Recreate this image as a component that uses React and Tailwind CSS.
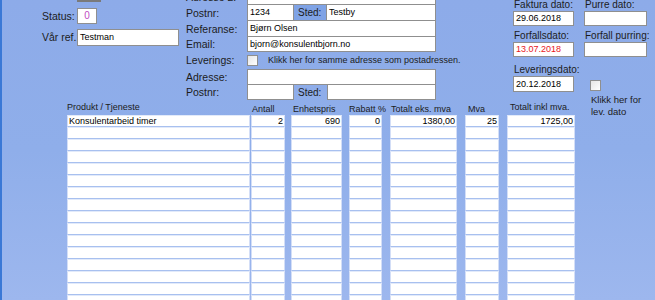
import React from 'react';

const label = "text-[10.5px] leading-none text-[#1c1c1c] whitespace-nowrap";
const frame = "bg-white border border-[#8f8f8f] leading-none flex items-center whitespace-nowrap";
const box = `${frame} text-[9px] text-black pl-[2px]`;

const columns = [
    { key: 'prod', head: 'Produkt / Tjeneste', w: 'w-[183px]', gap: 'mr-[1px]', headPad: 'pl-0 pb-[4px]', align: 'justify-start pl-[1px]', value: 'Konsulentarbeid timer' },
    { key: 'ant', head: 'Antall', w: 'w-[34px]', gap: 'mr-[6px]', headPad: 'pl-[1px]', align: 'justify-end pr-[1px]', value: '2' },
    { key: 'enh', head: 'Enhetspris', w: 'w-[51px]', gap: 'mr-[7px]', headPad: 'pl-[2px]', align: 'justify-end pr-[1px]', value: '690' },
    { key: 'rab', head: 'Rabatt %', w: 'w-[33px]', gap: 'mr-[8px]', headPad: 'pl-0', align: 'justify-end pr-[1px]', value: '0' },
    { key: 'eks', head: 'Totalt eks. mva', w: 'w-[67px]', gap: 'mr-[8px]', headPad: 'pl-[1px]', align: 'justify-end pr-[1px]', value: '1380,00' },
    { key: 'mva', head: 'Mva', w: 'w-[34px]', gap: 'mr-[8px]', headPad: 'pl-[3px]', align: 'justify-end pr-[1px]', value: '25' },
    { key: 'inkl', head: 'Totalt inkl mva.', w: 'w-[68px]', gap: '', headPad: 'pl-[3px] pb-[4px]', align: 'justify-end pr-[1px]', value: '1725,00' },
];

const ROWS = 16;

const Checkbox = ({ className = '' }) => (
    <div className={`w-[11px] h-[11px] shrink-0 border border-[#8f8f8f] bg-gradient-to-br from-[#e6e6e6] to-white ${className}`} />
);

const DateField = ({ title, value, red, w }) => (
    <>
        <div className="text-[10px] leading-[12px] h-[12px] text-[#1c1c1c] whitespace-nowrap pl-[1px]">{title}</div>
        <div className={`${frame} text-[9px] pl-[2px] ${w} h-[15px] ${red ? 'text-[#e8161c]' : 'text-black'}`}>{value}</div>
    </>
);

export default function App() {
    return (
        <div className="w-[655px] h-[300px] overflow-hidden flex border-l-2 border-[#3a78d6] bg-gradient-to-b from-[#8dabe9] via-[#8faeea] to-[#9db7ee] font-['Liberation_Sans',Arial,sans-serif]">
            {/* main column */}
            <div className="w-[582px] shrink-0 flex flex-col">
                <div className="h-[103px] shrink-0 flex items-start">
                    {/* left block */}
                    <div className="w-[184px] shrink-0 flex flex-col">
                        <div className="ml-[75px] w-[24px] h-[2px] bg-[#7a7a7a]" />
                        <div className="mt-[6px] h-[16px] flex items-center">
                            <div className={`${label} w-[75px] pl-[40px]`}>Status:</div>
                            <div className={`${frame} w-[20px] h-[16px] justify-center text-[10px] text-[#c04cc4]`}>0</div>
                        </div>
                        <div className="mt-[5px] h-[17px] flex items-center">
                            <div className={`${label} w-[75px] pl-[40px]`}>Vår ref.:</div>
                            <div className={`${box} w-[102px] h-[17px]`}>Testman</div>
                        </div>
                    </div>

                    {/* middle block */}
                    <div className="w-[327px] shrink-0 flex flex-col -mt-[11px]">
                        <div className="h-[16px] flex items-center">
                            <div className={`${label} w-[61px]`}>Adresse 2:</div>
                            <div className={`${box} w-[189px] h-[16px]`} />
                        </div>
                        <div className="h-[16px] flex items-center">
                            <div className={`${label} w-[61px]`}>Postnr:</div>
                            <div className="flex h-[16px] border-x border-b border-[#8f8f8f]">
                                <div className="w-[46px] bg-white text-[9px] leading-none flex items-center pl-[2px] border-r border-[#8f8f8f]">1234</div>
                                <div className="w-[33px] bg-[#7fa3e6] text-[10px] leading-none text-[#1c1c1c] flex items-center pl-[4px] border-r border-[#8f8f8f]">Sted:</div>
                                <div className="w-[108px] bg-white text-[9px] leading-none flex items-center pl-[2px]">Testby</div>
                            </div>
                        </div>
                        <div className="h-[16px] flex items-center">
                            <div className={`${label} w-[61px]`}>Referanse:</div>
                            <div className="w-[189px] h-[16px] bg-white border-x border-b border-[#8f8f8f] text-[9px] leading-none flex items-center pl-[2px]">Bjørn Olsen</div>
                        </div>
                        <div className="h-[15px] flex items-center">
                            <div className={`${label} w-[61px]`}>Email:</div>
                            <div className="w-[189px] h-[15px] bg-white border-x border-b border-[#8f8f8f] text-[9px] leading-none flex items-center pl-[2px]">bjorn@konsulentbjorn.no</div>
                        </div>
                        <div className="mt-[3px] h-[11px] flex items-center">
                            <div className={`${label} w-[61px]`}>Leverings:</div>
                            <Checkbox />
                            <div className="ml-[10px] text-[9px] leading-none text-[#1c1c1c] whitespace-nowrap">Klikk her for samme adresse som postadressen.</div>
                        </div>
                        <div className="mt-[3px] h-[16px] flex items-center">
                            <div className={`${label} w-[61px]`}>Adresse:</div>
                            <div className={`${box} w-[189px] h-[16px]`} />
                        </div>
                        <div className="h-[15px] flex items-center">
                            <div className={`${label} w-[61px]`}>Postnr:</div>
                            <div className="flex h-[15px]">
                                <div className="w-[47px] bg-white border-x border-b border-[#8f8f8f]" />
                                <div className="w-[33px] text-[10px] leading-none text-[#1c1c1c] flex items-center pl-[4px]">Sted:</div>
                                <div className="w-[109px] bg-white border-x border-b border-[#8f8f8f]" />
                            </div>
                        </div>
                    </div>

                    {/* faktura block */}
                    <div className="w-[61px] shrink-0 flex flex-col -mt-[1px]">
                        <DateField title="Faktura dato:" value="29.06.2018" w="w-[61px]" />
                        <div className="mt-[4px]" />
                        <DateField title="Forfallsdato:" value="13.07.2018" red w="w-[61px]" />
                        <div className="mt-[7px] text-[10px] leading-[12px] h-[12px] text-[#1c1c1c] whitespace-nowrap pl-[1px]">Leveringsdato:</div>
                        <div className={`${box} w-[61px] h-[16px]`}>20.12.2018</div>
                    </div>
                </div>

                {/* table */}
                <div className="ml-[65px] flex shrink-0">
                    {columns.map((c) => (
                        <div key={c.key} className={`${c.w} ${c.gap} shrink-0 flex flex-col`}>
                            <div className={`h-[12px] flex items-center text-[9px] leading-none text-[#1c1c1c] whitespace-nowrap ${c.headPad}`}>{c.head}</div>
                            {Array.from({ length: ROWS }).map((_, i) => (
                                <div key={i} className={`h-[12px] bg-white border-x border-[#d3def7] border-t border-t-[#e2eafa] border-b border-b-[#a8c0ef] flex items-center text-[9px] leading-none text-black whitespace-nowrap ${c.align}`}>
                                    {i === 0 ? c.value : ''}
                                </div>
                            ))}
                        </div>
                    ))}
                </div>
            </div>

            {/* right column */}
            <div className="w-[71px] shrink-0 flex flex-col -mt-[1px]">
                <DateField title="Purre dato:" value="" w="w-[63px]" />
                <div className="mt-[4px]" />
                <DateField title="Forfall purring:" value="" w="w-[63px]" />
                <Checkbox className="mt-[23px] ml-[6px]" />
                <div className="mt-[3px] ml-[7px] text-[9.5px] leading-[12px] text-[#1c1c1c]">
                    <div>Klikk her for</div>
                    <div>lev. dato</div>
                </div>
            </div>
        </div>
    );
}
